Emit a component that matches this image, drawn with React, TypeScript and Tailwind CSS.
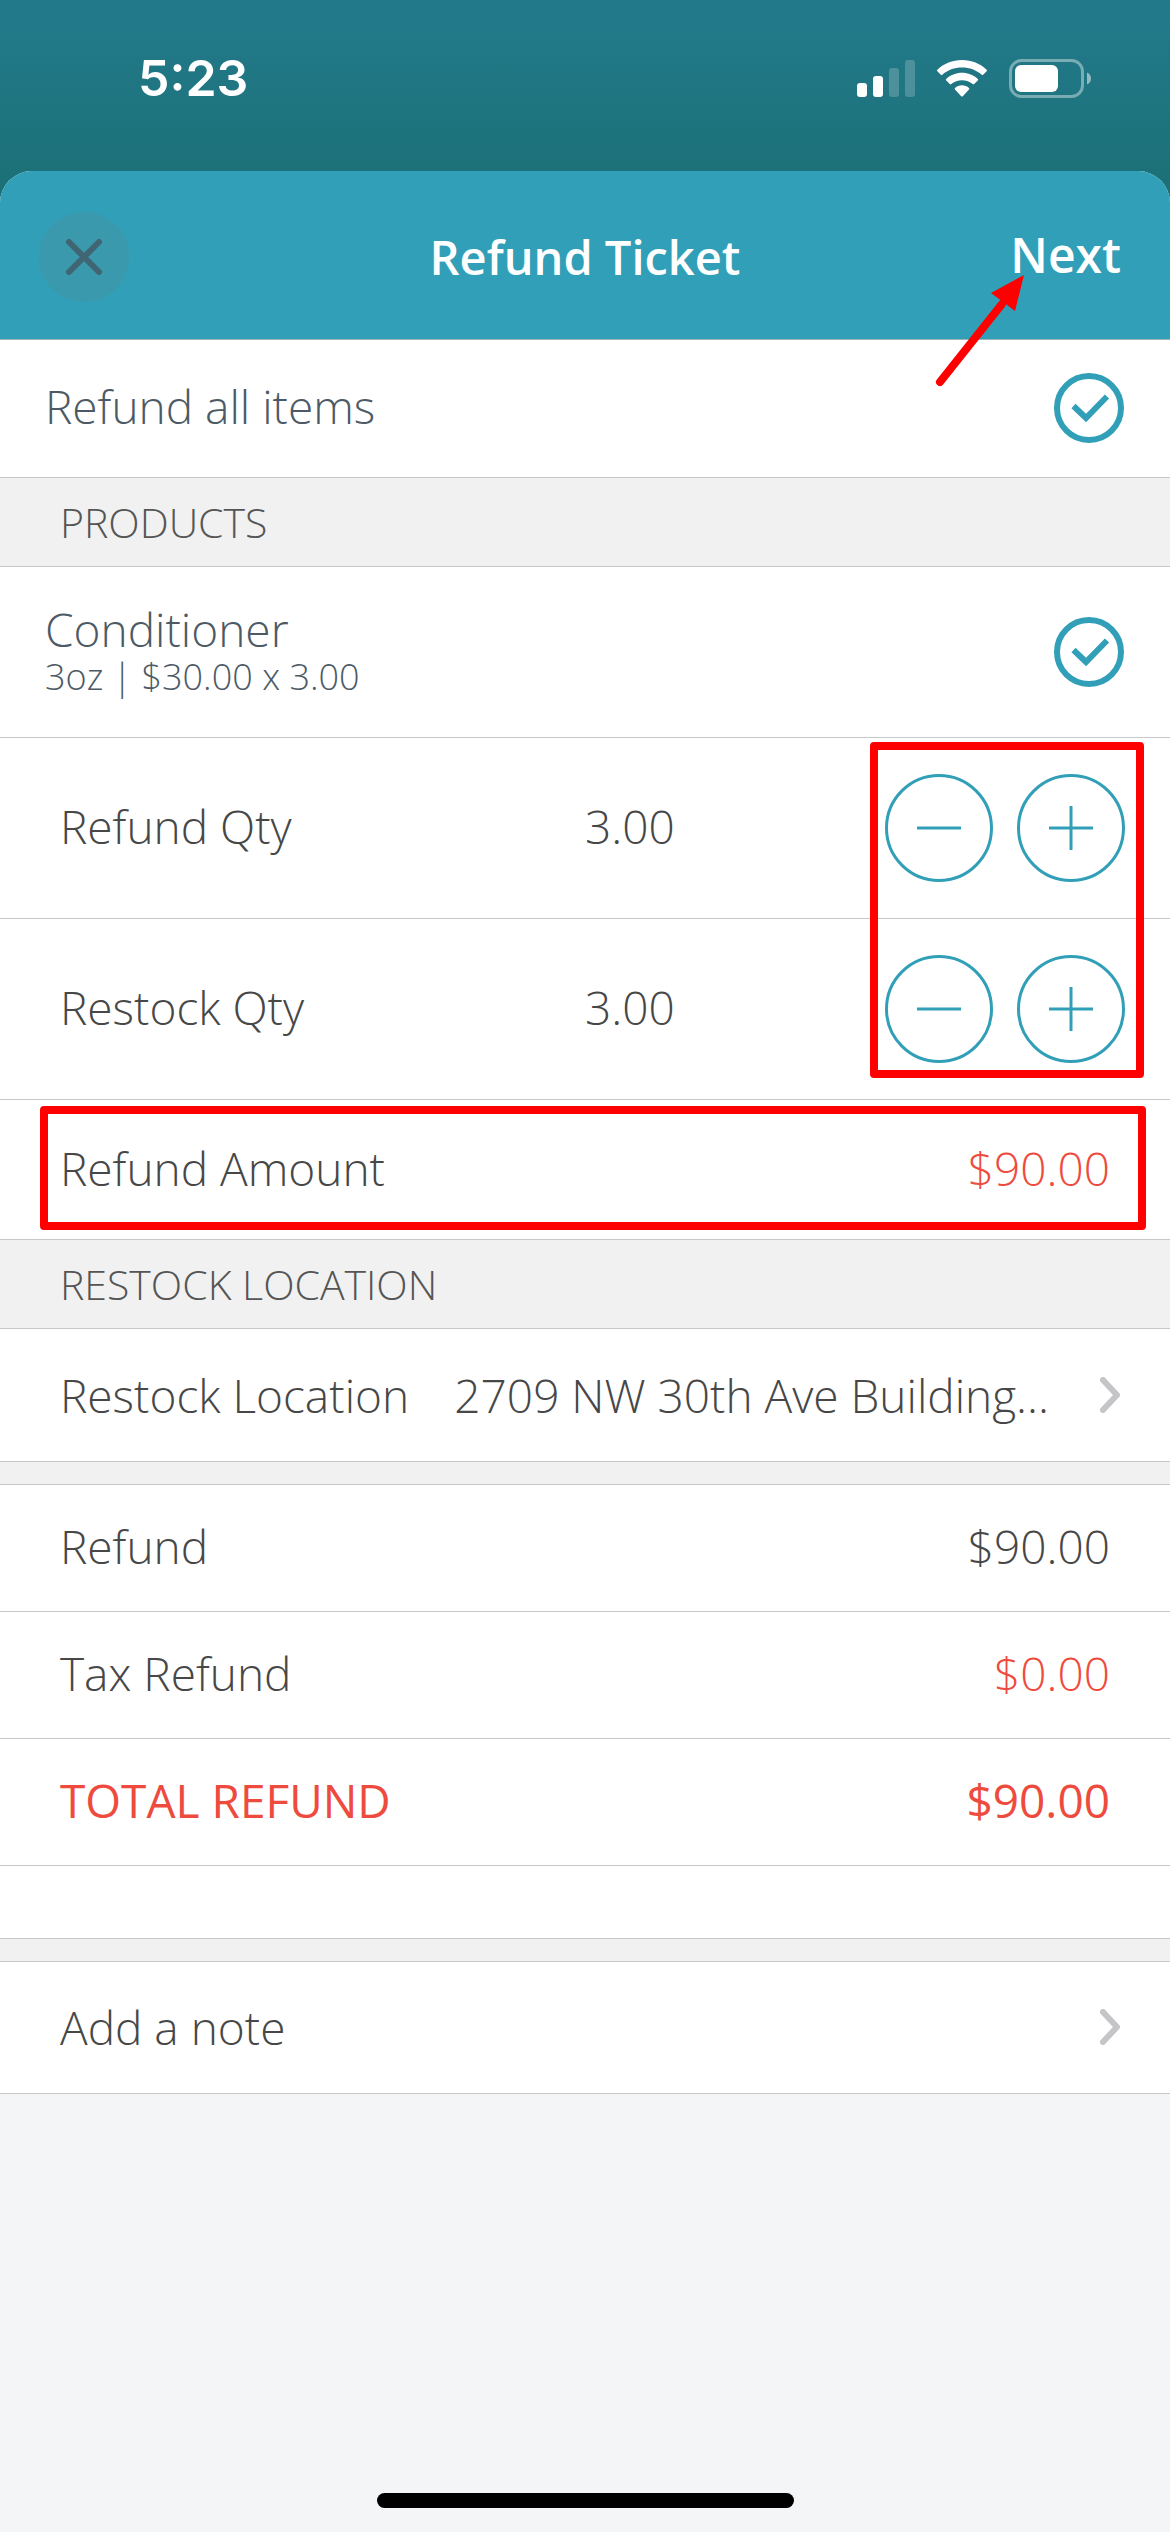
import { useState } from "react";
import type { ReactNode } from "react";
import { clsx } from "clsx";

const UNIT_PRICE = 30;

function money(value: number) {
    return `$${value.toFixed(2)}`;
}

function StatusBar() {
    return (
        <div className="flex items-center justify-between pt-12 pb-[63px] pl-[138px] pr-[79px] text-white">
            <span className="font-['Inter',sans-serif] text-[50px] leading-[60px] font-semibold">5:23</span>
            <div className="flex items-center gap-[22px]">
                <svg className="w-[58px] h-[38px]" viewBox="0 0 58 38" fill="currentColor" aria-label="Signal">
                    <rect x="0" y="24" width="10" height="14" rx="3" />
                    <rect x="16" y="17" width="10" height="21" rx="3" />
                    <rect x="32" y="9" width="10" height="29" rx="3" opacity="0.2" />
                    <rect x="48" y="1" width="10" height="37" rx="3" opacity="0.2" />
                </svg>
                <svg className="w-[50px] h-[37px]" viewBox="0 0 50 37" fill="currentColor" aria-label="Wi-Fi">
                    <path d="M25 0C34.500 0 43.200 3.600 49.600 9.700Q50.400 10.500 49.600 11.300L46.200 14.800Q45.500 15.500 44.700 14.800C39.500 10 32.600 7.500 25 7.500S10.500 10 5.300 14.800Q4.500 15.500 3.800 14.800L0.400 11.300Q-0.400 10.500 0.400 9.700C6.800 3.600 15.500 0 25 0Z" />
                    <path d="M25 12.700C31 12.700 36.600 15 40.800 18.900Q41.600 19.700 40.800 20.500L37.200 24.100Q36.500 24.800 35.700 24.100C32.800 21.500 29.100 20.200 25 20.200S17.200 21.500 14.300 24.100Q13.500 24.800 12.800 24.100L9.200 20.500Q8.400 19.700 9.200 18.900C13.400 15 19 12.700 25 12.700Z" />
                    <path d="M25 25.300C27.700 25.300 30.100 26.300 32 28Q32.800 28.700 32 29.500L25.800 36.200Q25 37 24.200 36.200L18 29.500Q17.200 28.700 18 28C19.900 26.300 22.300 25.300 25 25.300Z" />
                </svg>
                <svg className="w-[82px] h-[39px]" viewBox="0 0 82 39" fill="currentColor" aria-label="Battery">
                    <rect x="1.500" y="1.500" width="72" height="36" rx="11" fill="none" stroke="currentColor" strokeWidth="3" opacity="0.4" />
                    <rect x="6" y="6" width="43" height="27" rx="6" />
                    <path d="M78 13.500C80.500 14.500 82 16.800 82 19.500S80.500 24.500 78 25.500Z" opacity="0.5" />
                </svg>
            </div>
        </div>
    );
}

function Chevron() {
    return (
        <svg className="w-[22px] h-[36px] shrink-0 text-[#c5c5c8]" viewBox="0 0 22 36" fill="none" stroke="currentColor" strokeWidth="6" strokeLinecap="round" strokeLinejoin="round">
            <path d="M4 3 18 18 4 33" />
        </svg>
    );
}

function CheckCircle({ id, defaultChecked }: { id: string; defaultChecked?: boolean }) {
    return (
        <span className="relative size-[70px] shrink-0">
            <input
                id={id}
                type="checkbox"
                defaultChecked={defaultChecked}
                className="peer block size-full appearance-none rounded-full border-6 border-[#319fb7]"
            />
            <svg className="hidden peer-checked:block absolute inset-0 pointer-events-none text-[#319fb7]" viewBox="0 0 70 70" fill="none" stroke="currentColor" strokeWidth="6">
                <path d="M19.500 33 32 45 53 23.500" />
            </svg>
        </span>
    );
}

function SectionHeader({ children }: { children: ReactNode }) {
    return (
        <h2 className="bg-[#f1f1f1] border-b border-[#c8c8ca] px-15 py-5 text-[41px] leading-[48px] text-[#555]">
            {children}
        </h2>
    );
}

function Divider() {
    return <div className="h-[23px] bg-[#f1f1f1] border-b border-[#c8c8ca]" />;
}

function StepButton({ label, plus, onClick }: { label: string; plus?: boolean; onClick: () => void }) {
    return (
        <button type="button" aria-label={label} onClick={onClick} className="flex items-center justify-center size-[108px] rounded-full border-3 border-[#319fb7] text-[#319fb7]">
            <svg className="size-[44px]" viewBox="0 0 44 44" fill="none" stroke="currentColor" strokeWidth="3">
                <path d="M0 22H44" />
                {plus && <path d="M22 0V44" />}
            </svg>
        </button>
    );
}

interface QtyRowProps {
    label: string;
    value: number;
    onChange: (value: number) => void;
}

function QtyRow({ label, value, onChange }: QtyRowProps) {
    return (
        <div className="grid grid-cols-2 items-center border-b border-[#c8c8ca] py-9">
            <span className="pl-15 pb-1">{label}</span>
            <div className="flex items-center justify-between pr-[45px]">
                <output className="pb-1">{value.toFixed(2)}</output>
                <div className="flex gap-6">
                    <StepButton label={`Decrease ${label}`} onClick={() => onChange(Math.max(0, value - 1))} />
                    <StepButton label={`Increase ${label}`} plus onClick={() => onChange(value + 1)} />
                </div>
            </div>
        </div>
    );
}

interface AmountRowProps {
    label: string;
    amount: number;
    red?: boolean;
    total?: boolean;
}

function AmountRow({ label, amount, red, total }: AmountRowProps) {
    return (
        <div className={clsx("flex items-center justify-between border-b border-[#c8c8ca] px-15 pt-8 pb-9", total && "font-medium text-[#ee4b3e]")}>
            <dt>{label}</dt>
            <dd className={clsx(red && "text-[#ee4b3e]")}>{money(amount)}</dd>
        </div>
    );
}

export default function App() {
    const [refundQty, setRefundQty] = useState(3);
    const [restockQty, setRestockQty] = useState(3);
    const refund = refundQty * UNIT_PRICE;

    return (
        <div className="min-h-screen flex flex-col bg-linear-to-b from-[#237a8b] to-[#1c7179] to-[171px] font-['Open_Sans',sans-serif] text-[46px] leading-[58px] font-light text-[#474747]">
            <StatusBar />

            <main className="flex-1 flex flex-col rounded-t-[32px] bg-[#f3f5f7]">
                <header className="relative grid grid-cols-[1fr_auto_1fr] items-center rounded-t-[32px] border-b border-[#9fb4ba] bg-[#319fb7] px-[39px] pt-[41px] pb-[37px] text-white">
                    <button type="button" aria-label="Close" className="flex items-center justify-center size-[90px] rounded-full bg-[#3b99ad] text-[#3f6672]">
                        <svg className="size-[38px]" viewBox="0 0 38 38" fill="none" stroke="currentColor" strokeWidth="6" strokeLinecap="round">
                            <path d="M4 4 34 34M34 4 4 34" />
                        </svg>
                    </button>
                    <h1 className="text-[47px] font-semibold">Refund Ticket</h1>
                    <button type="button" className="justify-self-end pr-2.5 pb-1 text-[48px] font-semibold">Next</button>

                    {/* callout arrow pointing at Next */}
                    <svg className="absolute z-10 top-[99px] right-[140px] w-[100px] h-[125px] pointer-events-none" viewBox="0 0 100 125">
                        <path d="M10 112 72 34" stroke="#f00" strokeWidth="8" strokeLinecap="round" />
                        <path d="M94 5 61 23 85 41Z" fill="#f00" />
                    </svg>
                </header>

                <div className="bg-white">
                    <label htmlFor="all-items" className="flex items-center justify-between border-b border-[#c8c8ca] pl-[45px] pr-[46px] pt-[33px] pb-[34px] text-[#4d5a65]">
                        <span className="pb-1">Refund all items</span>
                        <CheckCircle id="all-items" defaultChecked />
                    </label>

                    <SectionHeader>PRODUCTS</SectionHeader>

                    <label htmlFor="conditioner" className="flex items-center justify-between border-b border-[#c8c8ca] pl-[45px] pr-[46px] py-9 text-[#4d5a65]">
                        <span className="flex flex-col pt-0.5 leading-[48px]">
                            <span>Conditioner</span>
                            <span className="text-[36px]">3oz | $30.00 x 3.00</span>
                        </span>
                        <CheckCircle id="conditioner" defaultChecked />
                    </label>

                    <div className="relative">
                        <QtyRow label="Refund Qty" value={refundQty} onChange={setRefundQty} />
                        <QtyRow label="Restock Qty" value={restockQty} onChange={setRestockQty} />
                        <div className="absolute top-1 bottom-[22px] right-[26px] w-[274px] rounded-sm border-8 border-[#f00] pointer-events-none" />
                    </div>

                    <div className="relative flex items-center justify-between border-b border-[#c8c8ca] px-15 pt-[39px] pb-[42px]">
                        <span>Refund Amount</span>
                        <span className="text-[#ee4b3e]">{money(refund)}</span>
                        <div className="absolute top-1.5 bottom-[9px] left-10 right-6 rounded-sm border-8 border-[#f00] pointer-events-none" />
                    </div>

                    <SectionHeader>RESTOCK LOCATION</SectionHeader>

                    <button type="button" className="flex w-full items-center border-b border-[#c8c8ca] pl-15 pr-[49px] py-[37px] text-left">
                        <span className="shrink-0">Restock Location</span>
                        <span className="ml-auto pr-[50px] whitespace-nowrap">2709 NW 30th Ave Building...</span>
                        <Chevron />
                    </button>

                    <Divider />

                    <dl>
                        <AmountRow label="Refund" amount={refund} />
                        <AmountRow label="Tax Refund" amount={0} red />
                        <AmountRow label="TOTAL REFUND" amount={refund} total />
                    </dl>
                    <div className="h-[73px] border-b border-[#c8c8ca]" />

                    <Divider />

                    <button type="button" className="flex w-full items-center justify-between border-b border-[#c8c8ca] pl-15 pr-[49px] pt-9 pb-[37px] text-left">
                        <span>Add a note</span>
                        <Chevron />
                    </button>
                </div>

                <div className="mt-auto mb-6 self-center w-[417px] h-[15px] rounded-full bg-black" />
            </main>
        </div>
    );
}
